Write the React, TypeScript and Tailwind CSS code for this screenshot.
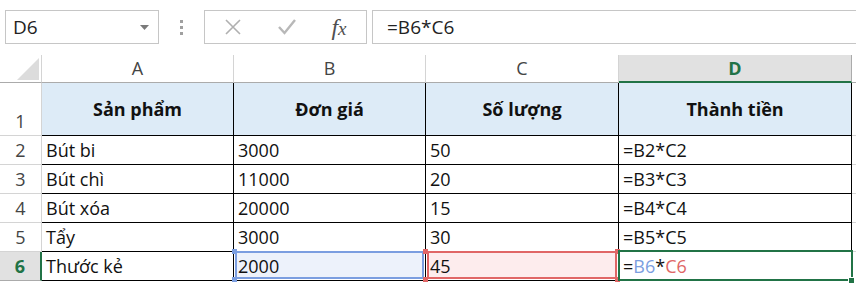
import React from 'react';

const font = { fontFamily: '"Open Sans", "Noto Sans", sans-serif' };

const rows = [
  { n: 2, a: 'Bút bi', b: '3000', c: '50', d: '=B2*C2' },
  { n: 3, a: 'Bút chì', b: '11000', c: '20', d: '=B3*C3' },
  { n: 4, a: 'Bút xóa', b: '20000', c: '15', d: '=B4*C4' },
  { n: 5, a: 'Tẩy', b: '3000', c: '30', d: '=B5*C5' },
];

const Handle = ({ pos, color }: { pos: string; color: string }) => (
  <span className={`absolute w-[5px] h-[5px] ${pos} ${color}`} />
);

const FormulaBar = () => (
  <div className="flex items-center h-[34px] mt-[10px] pl-[5px]">
    <div className="w-[154px] h-full border border-[#c6c6c6] flex items-center justify-between pl-[7px] pr-[9px] text-[19px] text-[#222]">
      <span>D6</span>
      <svg width="9" height="5" viewBox="0 0 9 5">
        <path d="M0 0 H9 L4.5 5 Z" fill="#7a7a7a" />
      </svg>
    </div>
    <div className="w-[45px] flex flex-col items-center gap-[3px]">
      <span className="w-[3px] h-[3px] bg-[#a0a0a0]" />
      <span className="w-[3px] h-[3px] bg-[#a0a0a0]" />
      <span className="w-[3px] h-[3px] bg-[#a0a0a0]" />
    </div>
    <div className="w-[163px] h-full border border-[#c6c6c6] flex items-center">
      <div className="w-[56px] flex justify-center">
        <svg width="16" height="16" viewBox="0 0 16 16">
          <path d="M1 1 L15 15 M15 1 L1 15" stroke="#b0b0b0" strokeWidth="1.6" />
        </svg>
      </div>
      <div className="w-[52px] flex justify-center">
        <svg width="18" height="16" viewBox="0 0 18 16">
          <path d="M1 8 L6.5 14 L17 1" stroke="#b8b8b8" strokeWidth="2.4" fill="none" />
        </svg>
      </div>
      <div className="w-[52px] flex justify-center items-baseline text-[#505050] italic" style={{ fontFamily: '"Liberation Serif", serif' }}>
        <span className="text-[24px]">f</span>
        <span className="text-[19px]">x</span>
      </div>
    </div>
    <div className="flex-1 h-full border-y border-l border-[#c6c6c6] ml-[5px] flex items-center pl-[14px] text-[19px] text-[#222]">
      =B6*C6
    </div>
  </div>
);

const App = () => {
  return (
    <div className="w-[856px] h-[284px] bg-white overflow-hidden" style={font}>
      <FormulaBar />
      <div className="mt-[11px]">
        {/* column headers */}
        <div className="flex h-[28px] text-[18px] text-[#444]">
          <div className="w-[42px] border-r border-b border-[#d4d4d4] border-b-[#ababab] relative">
            <svg className="absolute right-[2px] bottom-[2px]" width="22" height="22" viewBox="0 0 22 22">
              <path d="M22 0 V22 H0 Z" fill="#dcdcdc" />
            </svg>
          </div>
          <div className="w-[192px] border-r border-b border-[#d4d4d4] border-b-[#ababab] flex items-center justify-center">A</div>
          <div className="w-[192px] border-r border-b border-[#d4d4d4] border-b-[#ababab] flex items-center justify-center">B</div>
          <div className="w-[193px] border-r border-b border-[#d4d4d4] border-b-[#ababab] flex items-center justify-center">C</div>
          <div className="w-[233px] bg-[#e1e1e1] border-r border-[#ababab] border-b-2 border-b-[#217346] flex items-center justify-center font-bold text-[#217346]">D</div>
          <div className="flex-1 border-b border-[#ababab]" />
        </div>
        {/* row 1 */}
        <div className="flex h-[53px] text-[18px] text-[#111]">
          <div className="w-[42px] border-r border-b border-[#d4d4d4] text-[#444] flex items-end justify-center">1</div>
          <div className="w-[192px] bg-[#ddebf7] border-r border-b border-black flex items-center justify-center font-bold">Sản phẩm</div>
          <div className="w-[192px] bg-[#ddebf7] border-r border-b border-black flex items-center justify-center font-bold">Đơn giá</div>
          <div className="w-[193px] bg-[#ddebf7] border-r border-b border-black flex items-center justify-center font-bold">Số lượng</div>
          <div className="w-[233px] bg-[#ddebf7] border-r border-b border-black flex items-center justify-center font-bold">Thành tiền</div>
          <div className="flex-1 border-b border-[#d4d4d4]" />
        </div>
        {rows.map((r) => (
          <div key={r.n} className="flex h-[29px] text-[18px] text-[#111]">
            <div className="w-[42px] border-r border-b border-[#d4d4d4] text-[#444] flex items-center justify-center">{r.n}</div>
            <div className="w-[192px] border-r border-b border-black flex items-center pl-[4px]">{r.a}</div>
            <div className="w-[192px] border-r border-b border-black flex items-center pl-[4px]">{r.b}</div>
            <div className="w-[193px] border-r border-b border-black flex items-center pl-[4px]">{r.c}</div>
            <div className="w-[233px] border-r border-b border-black flex items-center pl-[4px]">{r.d}</div>
            <div className="flex-1 border-b border-[#d4d4d4]" />
          </div>
        ))}
        {/* row 6 */}
        <div className="flex h-[29px] text-[18px] text-[#111]">
          <div className="w-[42px] bg-[#e1e1e1] border-r-2 border-r-[#217346] border-b border-[#ababab] text-[#217346] font-bold flex items-center justify-center">6</div>
          <div className="w-[192px] border-r border-b border-black flex items-center pl-[4px]">Thước kẻ</div>
          <div className="w-[192px] border-r border-b border-black flex items-center pl-[4px] relative">
            <div className="absolute inset-[1px] -top-[1px] bg-[#edf2fb] border-2 border-[#7b9ee0]" />
            <Handle pos="-left-[2px] -top-[3px]" color="bg-[#7b9ee0]" />
            <Handle pos="-left-[2px] -bottom-[2px]" color="bg-[#7b9ee0]" />
            <span className="relative">2000</span>
          </div>
          <div className="w-[193px] border-r border-b border-black flex items-center pl-[4px] relative">
            <div className="absolute inset-[1px] -top-[1px] bg-[#fdeced] border-2 border-[#e06666]" />
            <Handle pos="-left-[3px] -top-[3px]" color="bg-[#e06666]" />
            <Handle pos="-right-[2px] -top-[3px]" color="bg-[#e06666]" />
            <Handle pos="-left-[3px] -bottom-[2px]" color="bg-[#e06666]" />
            <Handle pos="-right-[2px] -bottom-[2px]" color="bg-[#e06666]" />
            <span className="relative">45</span>
          </div>
          <div className="w-[233px] border-r border-b border-black flex items-center pl-[4px] relative">
            <div className="absolute -left-[1px] -top-[2px] right-[-2px] bottom-[-1px] border-2 border-[#217346]" />
            <span className="absolute -right-[4px] -bottom-[4px] w-[7px] h-[7px] bg-[#217346] border border-white" />
            <span className="relative">
              =<span className="text-[#7b9ee0]">B6</span>*<span className="text-[#e06666]">C6</span>
            </span>
          </div>
          <div className="flex-1" />
        </div>
      </div>
    </div>
  );
};

export default App;
